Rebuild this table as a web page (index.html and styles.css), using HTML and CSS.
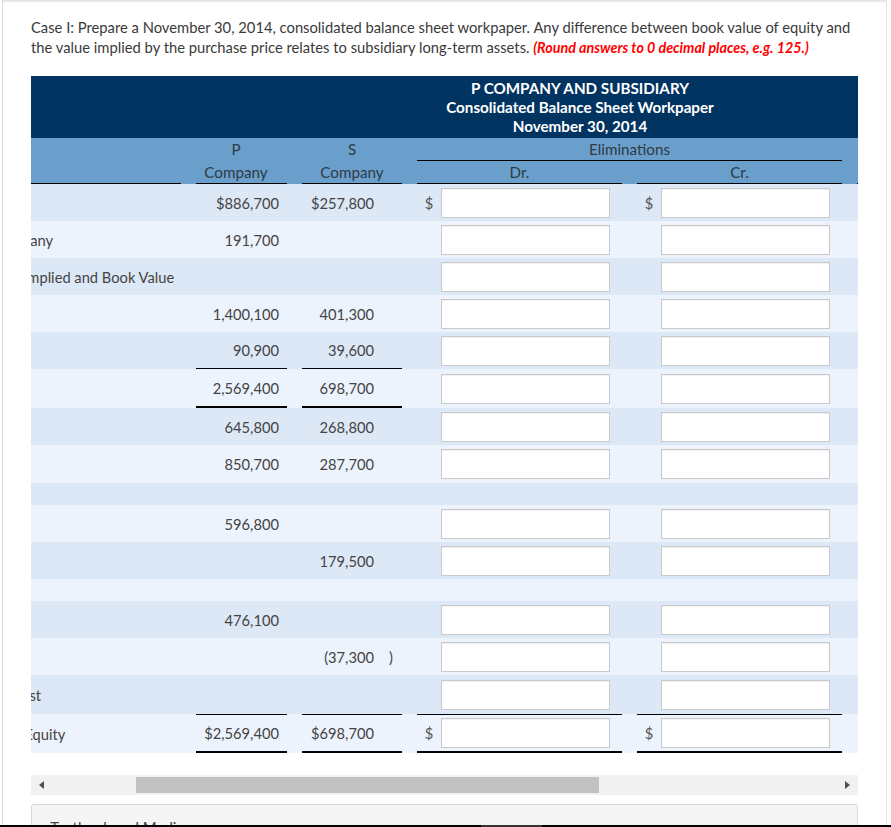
FILE: index.html
```html
<!DOCTYPE html>
<html lang="en">
<head>
<meta charset="utf-8">
<title>Consolidated Balance Sheet Workpaper</title>
<link rel="stylesheet" href="styles.css">
</head>
<body>
<div class="panel">
  <p class="intro">Case I: Prepare a November 30, 2014, consolidated balance sheet workpaper. Any difference between book value of equity and the value implied by the purchase price relates to subsidiary long-term assets. <em class="hint">(Round answers to 0 decimal places, e.g. 125.)</em></p>

  <div class="scroller">
    <div class="sheet">
      <div class="title">P COMPANY AND SUBSIDIARY<br>Consolidated Balance Sheet Workpaper<br>November 30, 2014</div>

      <div class="grid colhead">
        <div class="hc"></div>
        <div class="hc hp">P</div>
        <div class="hc">S</div>
        <div class="hc span2 ul">Eliminations</div>
        <div class="hc"></div>
        <div class="hc"></div>
        <div class="hc ul"></div>
        <div class="hc hp ul">Company</div>
        <div class="hc ul">Company</div>
        <div class="hc ul">Dr.</div>
        <div class="hc ul">Cr.</div>
        <div class="hc ul"></div>
        <div class="hc ul"></div>
      </div>

      <div class="grid row dark">
        <div class="lbl">Current Assets</div>
        <div class="num">$886,700</div>
        <div class="snum">$257,800<span class="paren"></span></div>
        <div class="amt"><span class="cur">$</span><input type="text"></div>
        <div class="amt"><span class="cur">$</span><input type="text"></div>
        <div></div><div></div>
      </div>
      <div class="grid row light">
        <div class="lbl lbl-in">Investment in S Company</div>
        <div class="num">191,700</div>
        <div class="snum"><span class="paren"></span></div>
        <div class="amt"><span class="cur"></span><input type="text"></div>
        <div class="amt"><span class="cur"></span><input type="text"></div>
        <div></div><div></div>
      </div>
      <div class="grid row dark">
        <div class="lbl">Difference between Implied and Book Value</div>
        <div class="num"></div>
        <div class="snum"><span class="paren"></span></div>
        <div class="amt"><span class="cur"></span><input type="text"></div>
        <div class="amt"><span class="cur"></span><input type="text"></div>
        <div></div><div></div>
      </div>
      <div class="grid row light">
        <div class="lbl">Long-Term Assets</div>
        <div class="num">1,400,100</div>
        <div class="snum">401,300<span class="paren"></span></div>
        <div class="amt"><span class="cur"></span><input type="text"></div>
        <div class="amt"><span class="cur"></span><input type="text"></div>
        <div></div><div></div>
      </div>
      <div class="grid row dark">
        <div class="lbl">Other Assets</div>
        <div class="num u1">90,900</div>
        <div class="snum u1">39,600<span class="paren"></span></div>
        <div class="amt"><span class="cur"></span><input type="text"></div>
        <div class="amt"><span class="cur"></span><input type="text"></div>
        <div></div><div></div>
      </div>
      <div class="grid row light h39">
        <div class="lbl">Total</div>
        <div class="num u2">2,569,400</div>
        <div class="snum u2">698,700<span class="paren"></span></div>
        <div class="amt"><span class="cur"></span><input type="text"></div>
        <div class="amt"><span class="cur"></span><input type="text"></div>
        <div></div><div></div>
      </div>
      <div class="grid row dark">
        <div class="lbl">Current Liabilities</div>
        <div class="num">645,800</div>
        <div class="snum">268,800<span class="paren"></span></div>
        <div class="amt"><span class="cur"></span><input type="text"></div>
        <div class="amt"><span class="cur"></span><input type="text"></div>
        <div></div><div></div>
      </div>
      <div class="grid row light h38">
        <div class="lbl">Long-Term Liabilities</div>
        <div class="num">850,700</div>
        <div class="snum">287,700<span class="paren"></span></div>
        <div class="amt"><span class="cur"></span><input type="text"></div>
        <div class="amt"><span class="cur"></span><input type="text"></div>
        <div></div><div></div>
      </div>
      <div class="grid row dark short">
        <div class="lbl"></div>
        <div></div><div></div><div></div><div></div><div></div><div></div>
      </div>
      <div class="grid row light">
        <div class="lbl">Common Stock</div>
        <div class="num">596,800</div>
        <div class="snum"><span class="paren"></span></div>
        <div class="amt"><span class="cur"></span><input type="text"></div>
        <div class="amt"><span class="cur"></span><input type="text"></div>
        <div></div><div></div>
      </div>
      <div class="grid row dark">
        <div class="lbl">Common Stock</div>
        <div class="num"></div>
        <div class="snum">179,500<span class="paren"></span></div>
        <div class="amt"><span class="cur"></span><input type="text"></div>
        <div class="amt"><span class="cur"></span><input type="text"></div>
        <div></div><div></div>
      </div>
      <div class="grid row light short">
        <div class="lbl"></div>
        <div></div><div></div><div></div><div></div><div></div><div></div>
      </div>
      <div class="grid row dark">
        <div class="lbl">Retained Earnings</div>
        <div class="num">476,100</div>
        <div class="snum"><span class="paren"></span></div>
        <div class="amt"><span class="cur"></span><input type="text"></div>
        <div class="amt"><span class="cur"></span><input type="text"></div>
        <div></div><div></div>
      </div>
      <div class="grid row light">
        <div class="lbl">Retained Earnings</div>
        <div class="num"></div>
        <div class="snum">(37,300<span class="paren">)</span></div>
        <div class="amt"><span class="cur"></span><input type="text"></div>
        <div class="amt"><span class="cur"></span><input type="text"></div>
        <div></div><div></div>
      </div>
      <div class="grid row dark h39">
        <div class="lbl">Noncontrolling Interest</div>
        <div class="num"></div>
        <div class="snum"><span class="paren"></span></div>
        <div class="amt"><span class="cur"></span><input type="text"></div>
        <div class="amt"><span class="cur"></span><input type="text"></div>
        <div></div><div></div>
      </div>
      <div class="grid row light h39">
        <div class="lbl lbl-wide">Total Liabilities and Equity</div>
        <div class="num tot">$2,569,400</div>
        <div class="snum tot">$698,700<span class="paren"></span></div>
        <div class="amt tot"><span class="cur">$</span><input type="text"></div>
        <div class="amt tot"><span class="cur">$</span><input type="text"></div>
        <div></div><div></div>
      </div>
    </div>
  </div>

  <div class="hscroll">
    <div class="sb-btn"><span class="tri-l"></span></div>
    <div class="sb-track"><div class="sb-thumb"></div></div>
    <div class="sb-btn"><span class="tri-r"></span></div>
  </div>

  <div class="media">eTextbook and Media</div>
</div>
<div class="edge"><span class="edge-seg"></span></div>
</body>
</html>
```
FILE: styles.css
```css
* { box-sizing: border-box; }

html, body {
  margin: 0;
  padding: 0;
  background: #fff;
}

body {
  height: 827px;
  overflow: hidden;
  font-family: Lato, "Liberation Sans", sans-serif;
  font-size: 14px;
  color: #333;
}

.panel {
  margin-left: 2px;
  width: 885px;
  min-height: 827px;
  border-left: 1px solid #dadada;
  border-right: 1px solid #e4e4e4;
  padding: 17px 28px 0;
  box-shadow: inset 0 3px 3px -2px rgba(0, 0, 0, 0.18);
}

.intro {
  margin: 0 0 19px;
  font-size: 14.75px;
  line-height: 20px;
  color: #3a3a3a;
}

.hint {
  color: #f00;
  font-size: 14.3px;
  line-height: 1;
  font-weight: 700;
  font-style: italic;
}

.scroller {
  width: 827px;
  overflow: hidden;
}

.sheet {
  width: 1412px;
  margin-left: -157px;
}

.title {
  height: 62px;
  padding-top: 3px;
  background: #023461;
  color: #fff;
  font-size: 15.2px;
  font-weight: 700;
  text-align: center;
  line-height: 19px;
}

.grid {
  display: grid;
  grid-template-columns: 307px 91px 100px 205px 205px 205px 205px;
  column-gap: 15px;
}

.colhead {
  grid-template-rows: 23px 23px;
  background: #6a9fcc;
  color: #2f3a44;
  font-size: 15.2px;
}

.hc {
  text-align: center;
  line-height: 22px;
  white-space: nowrap;
}

.hp { padding-right: 11px; }

.span2 { grid-column: span 2; }

.ul { border-bottom: 1px solid #000; }

.row {
  height: 37px;
  color: #444;
  font-size: 14.7px;
}

.row.h38 { height: 38px; }
.row.h39 { height: 39px; }
.row.short { height: 22px; }

.dark { background: #dde8f7; }
.light { background: #ecf3fd; }

.row > div {
  display: flex;
  align-items: center;
}

.lbl {
  padding-left: 18px;
  white-space: nowrap;
}

.lbl-in { padding-left: 15px; }
.lbl-wide { padding-left: 24px; }

.num {
  justify-content: flex-end;
  padding-right: 8px;
}

.snum {
  justify-content: flex-end;
  padding-right: 9px;
}

.paren {
  width: 19px;
  text-align: right;
}

.amt {
  padding-right: 12px;
}

.cur {
  width: 24px;
  flex: none;
  text-align: center;
  color: #555;
}

.amt input {
  width: 169px;
  height: 30px;
  margin: 0;
  padding: 0 6px;
  border: 1px solid #c9c9c9;
  border-radius: 0;
  background: #fff;
  box-shadow: inset 0 1px 1px rgba(0, 0, 0, 0.06);
  font: inherit;
}

.u1 { border-bottom: 1px solid #000; }
.u2 { border-bottom: 2px solid #000; }
.tot {
  border-top: 1px solid #000;
  border-bottom: 2px solid #000;
}

.hscroll {
  display: flex;
  height: 20px;
  margin-top: 22px;
  background: #f1f1f1;
}

.sb-btn {
  width: 21px;
  flex: none;
  display: flex;
  align-items: center;
  justify-content: center;
}

.tri-l {
  width: 0;
  height: 0;
  border-top: 4px solid transparent;
  border-bottom: 4px solid transparent;
  border-right: 5px solid #505050;
}

.tri-r {
  width: 0;
  height: 0;
  border-top: 4px solid transparent;
  border-bottom: 4px solid transparent;
  border-left: 5px solid #505050;
}

.sb-track {
  flex: 1;
  padding: 2px 0 2px 84px;
}

.sb-thumb {
  width: 463px;
  height: 100%;
  background: #c1c1c1;
}

.media {
  margin-top: 9px;
  padding: 12px 12px;
  border: 1px solid #d9d9d9;
  border-radius: 3px;
  background: #f5f5f5;
  color: #444;
  font-size: 15px;
  line-height: 20px;
}

.edge {
  position: fixed;
  left: 0;
  right: 0;
  bottom: 0;
  height: 2px;
  background: #000;
}

.edge-seg {
  display: block;
  margin-left: 481px;
  width: 61px;
  height: 2px;
  background: #333;
}
```
